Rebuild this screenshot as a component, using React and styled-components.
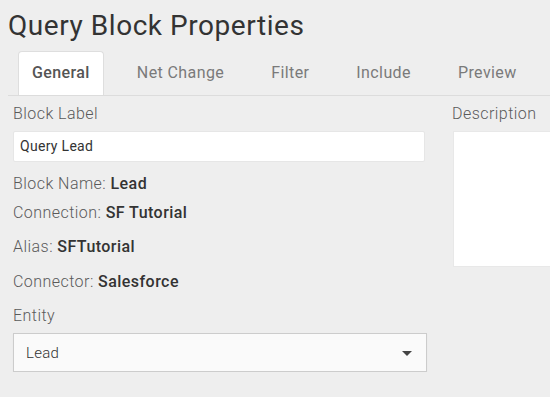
import React from 'react'
import styled, { createGlobalStyle } from 'styled-components'

const GlobalStyle = createGlobalStyle`
  html, body {
    margin: 0;
    background: #eeeeee;
    overflow: hidden;
  }
  body {
    font-family: Roboto, "Liberation Sans", sans-serif;
    color: #333;
  }
`

const Page = styled.div`
  padding-left: 8px;
  width: 700px;
`

const Title = styled.h1`
  margin: 9px 0 0;
  font-size: 28px;
  line-height: 34px;
  font-weight: 400;
  letter-spacing: 0.55px;
  color: #333;
`

const TabList = styled.ul`
  display: flex;
  gap: 19px;
  list-style: none;
  margin: 8px 0 0;
  padding: 0 0 0 10px;
  height: 44px;
  border-bottom: 1px solid #dcdcdc;
`

const Tab = styled.li`
  box-sizing: border-box;
  height: 44px;
  padding: 0 13px;
  line-height: 42px;
  font-size: 16px;
  letter-spacing: 0.4px;
  font-weight: ${p => (p.$active ? 500 : 400)};
  color: ${p => (p.$active ? '#555' : '#7a7a7a')};
  background: ${p => (p.$active ? '#fff' : 'transparent')};
  border: 1px solid ${p => (p.$active ? '#dedede' : 'transparent')};
  border-bottom: none;
  border-radius: 4px 4px 0 0;
`

const Form = styled.div`
  display: grid;
  grid-template-columns: 414px 200px;
  column-gap: 25px;
  padding-left: 5px;
`

const Column = styled.div`
  display: flex;
  flex-direction: column;
`

const Label = styled.div`
  margin-top: ${p => p.$top}px;
  font-size: 16px;
  line-height: 20px;
  font-weight: 300;
  letter-spacing: 0.45px;
  color: #5a5a5a;
`

const Value = styled.strong`
  font-weight: 500;
  color: #333;
`

const TextInput = styled.div`
  box-sizing: border-box;
  margin-top: 7px;
  width: 412px;
  height: 31px;
  padding: 0 6px;
  background: #fff;
  border: 1px solid #e6e6e6;
  border-radius: 2px;
  font-size: 14px;
  letter-spacing: 0.3px;
  line-height: 29px;
  color: #333;
`

const TextArea = styled.div`
  box-sizing: border-box;
  margin-top: 7px;
  margin-left: 1px;
  width: 200px;
  height: 136px;
  background: #fff;
  border: 1px solid #e8e8e8;
  border-right: none;
`

const Select = styled.div`
  box-sizing: border-box;
  margin-top: 7px;
  width: 414px;
  height: 39px;
  padding: 0 14px 0 12px;
  display: flex;
  align-items: center;
  justify-content: space-between;
  background: #fafafa;
  border: 1px solid #cccccc;
  box-shadow: 0 1px 1px rgba(0, 0, 0, 0.06);
  font-size: 15px;
  font-weight: 300;
  letter-spacing: 0.3px;
  color: #333;
`

const Caret = styled.span`
  width: 0;
  height: 0;
  border-left: 5px solid transparent;
  border-right: 5px solid transparent;
  border-top: 5px solid #444;
  margin-top: 2px;
`

const tabs = ['General', 'Net Change', 'Filter', 'Include', 'Preview']

const Info = ({ top, name, value }) => (
  <Label $top={top}>
    {name}: <Value>{value}</Value>
  </Label>
)

export default function App() {
  return (
    <Page>
      <GlobalStyle />
      <Title>Query Block Properties</Title>
      <TabList>
        {tabs.map((t, i) => (
          <Tab key={t} $active={i === 0}>{t}</Tab>
        ))}
      </TabList>
      <Form>
        <Column>
          <Label $top={8}>Block Label</Label>
          <TextInput>Query Lead</TextInput>
          <Info top={12} name="Block Name" value="Lead" />
          <Info top={9} name="Connection" value="SF Tutorial" />
          <Info top={14} name="Alias" value="SFTutorial" />
          <Info top={15} name="Connector" value="Salesforce" />
          <Label $top={14}>Entity</Label>
          <Select>
            Lead
            <Caret />
          </Select>
        </Column>
        <Column>
          <Label $top={8}>Description</Label>
          <TextArea />
        </Column>
      </Form>
    </Page>
  )
}
